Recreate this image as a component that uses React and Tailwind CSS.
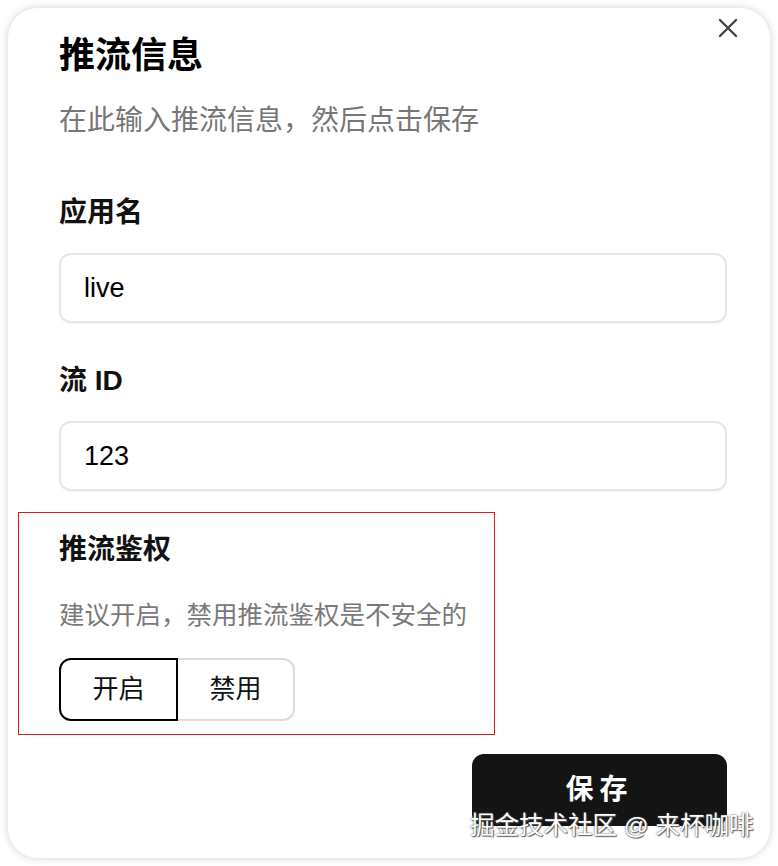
import { useState } from "react";

const FONT = "font-['Liberation_Sans','Noto_Sans_CJK_SC',sans-serif]";

const Field = ({ label, value, className = "" }) => (
  <div className={className}>
    <label className="block text-[28px] leading-[34px] font-semibold text-[#111]">{label}</label>
    <input
      defaultValue={value}
      className="mt-[23px] block h-[70px] w-full rounded-[12px] border-2 border-[#e6e6e6] bg-white px-[23px] text-[27px] text-black shadow-[0_1px_2px_rgba(0,0,0,0.05)] outline-none"
    />
  </div>
);

export default function App() {
  const [auth, setAuth] = useState("on");

  return (
    <div className={`relative h-[866px] w-[778px] bg-white ${FONT}`}>
      <div className="absolute left-[8px] top-[8px] h-[850px] w-[762px] rounded-[30px] bg-white shadow-[0_0_8px_rgba(0,0,0,0.18)]" />

      <div className="relative mx-[8px] pt-[36px] pl-[51px] pr-[43px]">
        <button className="absolute right-[31px] top-[17px] flex h-[22px] w-[22px] items-center justify-center text-[#444]">
          <svg width="20" height="20" viewBox="0 0 20 20" fill="none" stroke="currentColor" strokeWidth="2.4" strokeLinecap="round">
            <path d="M2 2L18 18M18 2L2 18" />
          </svg>
        </button>

        <h1 className="text-[36px] leading-[40px] font-bold text-black">推流信息</h1>
        <p className="mt-[27px] text-[28px] leading-[36px] text-[#777]">在此输入推流信息，然后点击保存</p>

        <Field label="应用名" value="live" className="mt-[57px]" />
        <Field label="流 ID" value="123" className="mt-[41px]" />

        <div className="relative mt-[42px]">
          <div className="pointer-events-none absolute left-[-41px] top-[-21px] h-[223px] w-[477px] border-[1.5px] border-[#e01b1b]" />
          <div className="text-[28px] leading-[34px] font-semibold text-[#111]">推流鉴权</div>
          <p className="mt-[31px] text-[25.5px] leading-[34px] text-[#7a7a7a]">建议开启，禁用推流鉴权是不安全的</p>
          <div className="mt-[26px] flex">
            <button
              onClick={() => setAuth("on")}
              className={`h-[63px] w-[119px] rounded-l-[12px] border-2 text-[26px] text-[#111] ${auth === "on" ? "border-black" : "border-[#dcdcdc] border-r-0"}`}
            >
              开启
            </button>
            <button
              onClick={() => setAuth("off")}
              className={`h-[63px] w-[117px] rounded-r-[12px] border-2 text-[26px] text-[#111] ${auth === "off" ? "border-black" : "border-[#dcdcdc] border-l-0"}`}
            >
              禁用
            </button>
          </div>
        </div>

        <div className="mt-[33px] flex justify-end">
          <button className="h-[72px] w-[255px] rounded-[12px] bg-[#141414] text-[28px] font-bold tracking-[6px] text-white">保存</button>
        </div>
      </div>

      <div className="pointer-events-none absolute left-[470px] top-[810px] text-[24.5px] leading-[32px] text-white [text-shadow:0_0_2px_#444,1px_1px_1px_#666]">
        掘金技术社区 @ 来杯咖啡
      </div>
    </div>
  );
}
